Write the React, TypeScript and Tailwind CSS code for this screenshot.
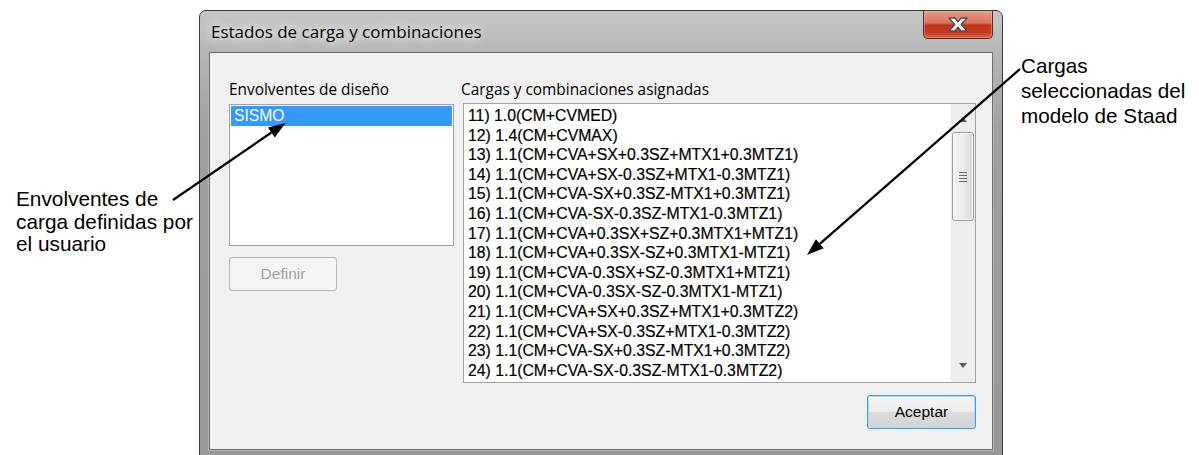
import React from "react";

const cargas = [
  "11) 1.0(CM+CVMED)",
  "12) 1.4(CM+CVMAX)",
  "13) 1.1(CM+CVA+SX+0.3SZ+MTX1+0.3MTZ1)",
  "14) 1.1(CM+CVA+SX-0.3SZ+MTX1-0.3MTZ1)",
  "15) 1.1(CM+CVA-SX+0.3SZ-MTX1+0.3MTZ1)",
  "16) 1.1(CM+CVA-SX-0.3SZ-MTX1-0.3MTZ1)",
  "17) 1.1(CM+CVA+0.3SX+SZ+0.3MTX1+MTZ1)",
  "18) 1.1(CM+CVA+0.3SX-SZ+0.3MTX1-MTZ1)",
  "19) 1.1(CM+CVA-0.3SX+SZ-0.3MTX1+MTZ1)",
  "20) 1.1(CM+CVA-0.3SX-SZ-0.3MTX1-MTZ1)",
  "21) 1.1(CM+CVA+SX+0.3SZ+MTX1+0.3MTZ2)",
  "22) 1.1(CM+CVA+SX-0.3SZ+MTX1-0.3MTZ2)",
  "23) 1.1(CM+CVA-SX+0.3SZ-MTX1+0.3MTZ2)",
  "24) 1.1(CM+CVA-SX-0.3SZ-MTX1-0.3MTZ2)",
];

function CloseButton() {
  return (
    <div className="relative flex h-[28px] w-[70px] items-center justify-center rounded-b-[5px] border border-t-0 border-[#5e231a] bg-[linear-gradient(to_bottom,#e59a86_0%,#d6735c_45%,#c0321a_52%,#c43a20_78%,#da6246_100%)] shadow-[inset_0_0_0_1px_rgba(255,200,185,0.4)]">
      <svg width="24" height="17" viewBox="0 0 24 17">
        <path
          d="M3 2 L9 2 L12 5.8 L15 2 L21 2 L15.2 8.5 L21 15 L15 15 L12 11.2 L9 15 L3 15 L8.8 8.5 Z"
          fill="#f6f6f6"
          stroke="#505050"
          strokeWidth="1.3"
          strokeLinejoin="round"
        />
      </svg>
    </div>
  );
}

function ScrollBar() {
  return (
    <div className="flex h-full w-[25px] shrink-0 flex-col items-center border-l border-[#f7f7f7] bg-[#ededed]">
      <div className="flex h-[28px] w-full items-center justify-center pt-[2px]">
        <svg width="8" height="5" viewBox="0 0 8 5">
          <path d="M0 5 L4 0 L8 5 Z" fill="#5a5a5a" />
        </svg>
      </div>
      <div className="flex h-[89px] w-[22px] items-center justify-center rounded-[3px] border border-[#9c9c9c] bg-[linear-gradient(to_right,#f6f6f6,#ebebeb_50%,#d6d6d6)] shadow-[inset_0_0_0_1px_#fbfbfb]">
        <div className="flex flex-col gap-[2px]">
          <div className="h-[1px] w-[8px] bg-[#6a6a6a]" />
          <div className="h-[1px] w-[8px] bg-[#6a6a6a]" />
          <div className="h-[1px] w-[8px] bg-[#6a6a6a]" />
          <div className="h-[1px] w-[8px] bg-[#6a6a6a]" />
        </div>
      </div>
      <div className="flex-1" />
      <div className="flex h-[28px] w-full items-center justify-center pb-[6px]">
        <svg width="8" height="5" viewBox="0 0 8 5">
          <path d="M0 0 L8 0 L4 5 Z" fill="#5a5a5a" />
        </svg>
      </div>
    </div>
  );
}

function Dialog() {
  return (
    <div className="mt-[10px] flex h-[447px] w-[804px] shrink-0 flex-col rounded-t-[7px] border border-[#3a3a3a] bg-[linear-gradient(to_bottom,#c6c6c6_0px,#b6b6b6_42px,#a0a0a0_120px,#979797_100%)] px-[9px] pb-[6px]">
      {/* title bar */}
      <div className="flex h-[41px] shrink-0 items-start justify-between">
        <div className="flex h-[41px] items-center pl-[2px]">
          <span className="font-['Open_Sans',sans-serif] text-[17px] text-black [text-shadow:0_0_8px_#ffffff,0_0_14px_#ffffff]">
            Estados de carga y combinaciones
          </span>
        </div>
        <CloseButton />
      </div>

      {/* client area */}
      <div className="flex flex-1 border border-[#6f6f6f] bg-[#f0f0f0] shadow-[0_0_0_1px_#b4b4b4] pl-[19px] pr-[14px] pt-[27px]">
        <div className="flex w-[225px] shrink-0 flex-col">
          <div className="h-[20px] whitespace-nowrap font-['Open_Sans',sans-serif] text-[15.4px] leading-[20px] text-black">
            Envolventes de diseño
          </div>
          <div className="mt-[4px] h-[142px] border border-[#a2a2a2] bg-white p-[1px]">
            <div className="flex h-[19.5px] items-center bg-[#3399ff] pl-[3px] font-['Liberation_Sans',sans-serif] text-[15.7px] text-white">
              SISMO
            </div>
          </div>
          <div className="mt-[11px] flex h-[34px] w-[108px] items-center justify-center rounded-[3px] border border-[#b8b8b8] bg-[#f4f4f4] font-['Liberation_Sans',sans-serif] text-[15.5px] text-[#a3a3a3]">
            Definir
          </div>
        </div>

        <div className="ml-[9px] flex w-[513px] shrink-0 flex-col">
          <div className="-ml-[2px] h-[20px] whitespace-nowrap font-['Open_Sans',sans-serif] text-[15.4px] leading-[20px] text-black">
            Cargas y combinaciones asignadas
          </div>
          <div className="mt-[3px] flex h-[280px] border border-[#a2a2a2] bg-white">
            <div className="flex-1 overflow-hidden pl-[4px] pt-[2px] font-['Liberation_Sans',sans-serif] text-[15.8px] leading-[19.6px] text-black [-webkit-text-stroke:0.2px_#000]">
              {cargas.map((c) => (
                <div key={c} className="whitespace-nowrap">
                  {c}
                </div>
              ))}
            </div>
            <ScrollBar />
          </div>
          <div className="mt-[12px] flex justify-end">
            <div className="flex h-[34px] w-[109px] items-center justify-center rounded-[3px] border border-[#3c9ee0] bg-[linear-gradient(to_bottom,#f6f6f6_0%,#ececec_48%,#dcdcdc_52%,#d2d2d2_100%)] shadow-[inset_0_0_0_1px_#a8dcf8] font-['Liberation_Sans',sans-serif] text-[15.5px] text-black">
              Aceptar
            </div>
          </div>
        </div>
      </div>
    </div>
  );
}

export default function App() {
  return (
    <div className="relative h-[455px] w-[1199px] overflow-hidden bg-white">
      <div className="flex items-start">
        {/* left callout */}
        <div className="w-[199px] shrink-0 pl-[16px] pt-[188px] font-['Liberation_Sans',sans-serif] text-[20.8px] leading-[22.5px] text-black">
          <div className="whitespace-nowrap">Envolventes de</div>
          <div className="whitespace-nowrap">carga definidas por</div>
          <div className="whitespace-nowrap">el usuario</div>
        </div>

        <Dialog />

        {/* right callout */}
        <div className="ml-[18px] shrink-0 pt-[53px] font-['Liberation_Sans',sans-serif] text-[20.7px] leading-[25px] text-black">
          <div className="whitespace-nowrap">Cargas</div>
          <div className="whitespace-nowrap">seleccionadas del</div>
          <div className="whitespace-nowrap">modelo de Staad</div>
        </div>
      </div>

      {/* callout arrows */}
      <svg
        className="pointer-events-none absolute inset-0"
        width="1199"
        height="455"
        viewBox="0 0 1199 455"
      >
        <line x1="173" y1="200" x2="271.4" y2="132.5" stroke="#000" strokeWidth="2.2" />
        <polygon points="285.5,123 274.8,137.5 268,127.6" fill="#000" />
        <line x1="1020" y1="69" x2="819.8" y2="243.8" stroke="#000" strokeWidth="2.2" />
        <polygon points="807,255 823.7,248.3 815.9,239.3" fill="#000" />
      </svg>
    </div>
  );
}
